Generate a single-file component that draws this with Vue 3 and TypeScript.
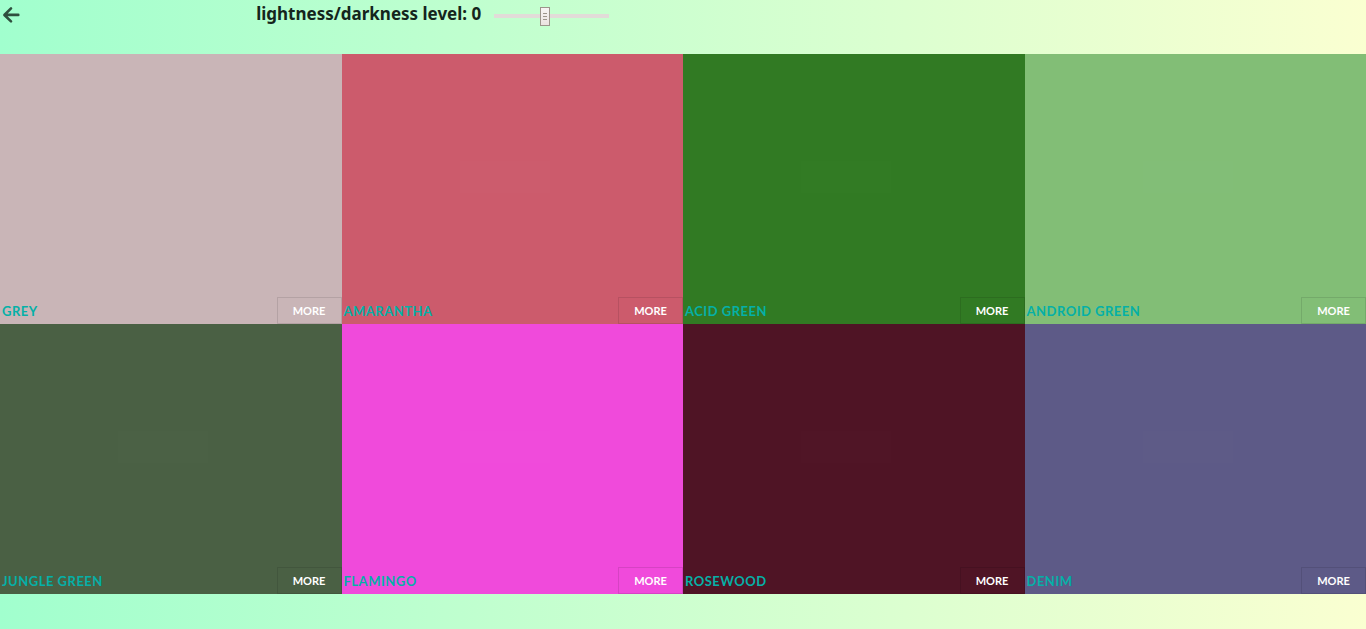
<script setup lang="ts">
import { ref } from 'vue'

interface Swatch {
  name: string
  color: string
}

const level = ref<number>(0)

const swatches: Swatch[] = [
  { name: 'Grey', color: '#c9b5b7' },
  { name: 'Amarantha', color: '#cc5b6c' },
  { name: 'Acid green', color: '#317a23' },
  { name: 'Android green', color: '#82be76' },
  { name: 'Jungle green', color: '#4a6044' },
  { name: 'Flamingo', color: '#f04adb' },
  { name: 'Rosewood', color: '#4f1425' },
  { name: 'Denim', color: '#5d5a87' },
]

function shade(color: string): string {
  if (level.value === 0) return color
  const target = level.value > 0 ? 'white' : 'black'
  return `color-mix(in srgb, ${color}, ${target} ${Math.abs(level.value) * 8}%)`
}
</script>

<template>
  <div class="palette">
    <header class="toolbar">
      <a class="back" href="#" aria-label="Back">
        <svg width="18" height="18" viewBox="0 0 18 18" fill="none" aria-hidden="true">
          <path d="M9 2.4 L2.4 9 L9 15.4 M2.6 8.9 H16.3" stroke="#2f4f3e" stroke-width="2.6" stroke-linecap="round" stroke-linejoin="round" />
        </svg>
      </a>
      <div class="level">
        <label for="level">lightness/darkness level: {{ level }}</label>
        <input id="level" v-model.number="level" class="slider" type="range" min="-7" max="9" />
      </div>
    </header>
    <main class="grid">
      <section v-for="swatch in swatches" :key="swatch.name" class="swatch" :style="{ backgroundColor: shade(swatch.color) }">
        <button class="copy" type="button">Copy</button>
        <div class="footer">
          <span class="name">{{ swatch.name }}</span>
          <button class="more" type="button">More</button>
        </div>
      </section>
    </main>
  </div>
</template>

<style>
html {
  min-height: 100%;
}
body {
  margin: 0;
}
</style>

<style scoped>
.palette {
  min-height: 100vh;
  background: linear-gradient(to right, #a1ffce, #faffd1);
  font-family: Lato, "Liberation Sans", sans-serif;
}
.toolbar {
  display: flex;
  align-items: flex-start;
  height: 54px;
}
.back {
  display: flex;
  flex: 0 0 18.75%;
  box-sizing: border-box;
  padding: 6px 0 0 2px;
}
.level {
  display: flex;
  align-items: center;
  gap: 13px;
  height: 28px;
  color: #14251c;
  font: 700 17px/28px "Noto Sans", sans-serif;
}
.slider {
  width: 115px;
  height: 19px;
  margin: 5px 0 0;
  appearance: none;
  background: linear-gradient(#e2dbd8, #e2dbd8) 0 7px / 100% 4px no-repeat;
}
.slider::-webkit-slider-thumb {
  appearance: none;
  box-sizing: border-box;
  width: 10px;
  height: 19px;
  border: 1px solid #9c958b;
  border-radius: 0;
  background:
    linear-gradient(#9c958b, #9c958b) 2px 5px / 4px 1px no-repeat,
    linear-gradient(#9c958b, #9c958b) 2px 8px / 4px 1px no-repeat,
    linear-gradient(#9c958b, #9c958b) 2px 11px / 4px 1px no-repeat,
    linear-gradient(#f7f5f3, #ebe2e0);
}
.grid {
  display: grid;
  grid-template-columns: repeat(4, 1fr);
  grid-auto-rows: 270px;
}
.swatch {
  display: flex;
  flex-direction: column;
  align-items: center;
}
.copy {
  width: 90px;
  height: 32px;
  margin: 107px 15px 0 0;
  border: 0;
  background: #ffffff;
  color: #ffffff;
  font: 700 14px Lato, sans-serif;
  text-transform: uppercase;
  opacity: 0.004;
}
.footer {
  display: flex;
  align-items: center;
  justify-content: space-between;
  align-self: stretch;
  margin-top: auto;
  padding-left: 2px;
}
.name {
  color: #05b0a7;
  font-size: 13px;
  font-weight: 700;
  letter-spacing: 0.5px;
  text-transform: uppercase;
}
.more {
  box-sizing: border-box;
  width: 65px;
  height: 27px;
  padding: 0;
  border: 1px solid rgba(0, 0, 0, 0.1);
  background: transparent;
  color: #ffffff;
  font: 700 11px Lato, sans-serif;
  text-transform: uppercase;
}
</style>
